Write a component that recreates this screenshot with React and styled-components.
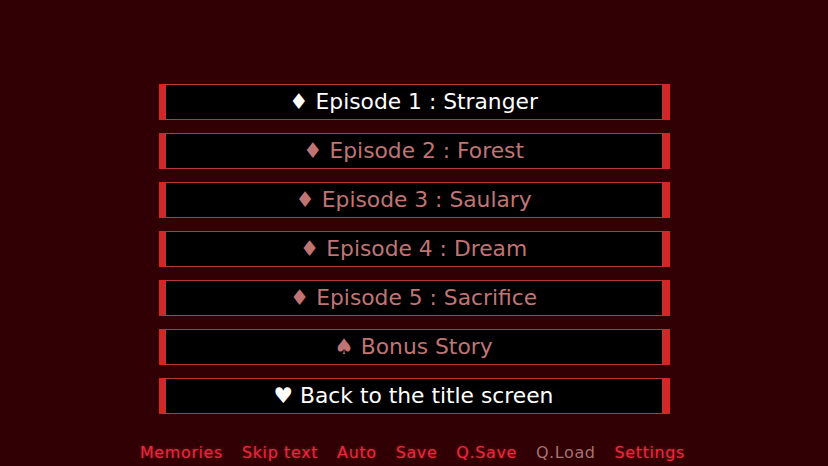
import React from "react";
import styled, { createGlobalStyle } from "styled-components";

const Global = createGlobalStyle`
  html, body { margin: 0; padding: 0; background: #300004; }
  #root { width: 828px; height: 466px; }
`;

const Screen = styled.div`
  width: 828px;
  height: 466px;
  background: #300004;
  display: flex;
  flex-direction: column;
  align-items: center;
  box-sizing: border-box;
  padding-top: 84px;
  font-family: "DejaVu Sans", sans-serif;
`;

const Menu = styled.div`
  display: flex;
  flex-direction: column;
  gap: 13px;
  width: 511px;
`;

const Choice = styled.div`
  display: flex;
  height: 36px;
`;

const Bar = styled.div`
  width: ${(p) => p.$w}px;
  background: #d42626;
`;

const Box = styled.div`
  flex: 1;
  background: #000;
  border: 1px solid #b43a3a;
  display: flex;
  align-items: center;
  justify-content: center;
  font-size: 21.8px;
  line-height: 1;
  padding-bottom: 1px;
  color: ${(p) => (p.$active ? "#ffffff" : "#c07474")};
`;

const Footer = styled.div`
  margin-top: 29px;
  display: flex;
  gap: 19px;
  margin-left: -3px;
`;

const FootItem = styled.span`
  font-family: "DejaVu Sans", sans-serif;
  font-size: 16px;
  letter-spacing: 0.6px;
  color: ${(p) => (p.$dim ? "#a87272" : "#e8283c")};
  text-shadow: ${(p) => (p.$dim ? "none" : "0 0 3px rgba(230,40,60,0.6)")};
`;

const items = [
  { t: "♦ Episode 1 : Stranger", a: true },
  { t: "♦ Episode 2 : Forest" },
  { t: "♦ Episode 3 : Saulary" },
  { t: "♦ Episode 4 : Dream" },
  { t: "♦ Episode 5 : Sacrifice" },
  { t: "♠ Bonus Story" },
  { t: "♥ Back to the title screen", a: true },
];

const foot = ["Memories", "Skip text", "Auto", "Save", "Q.Save", "Q.Load", "Settings"];

export default function App() {
  return (
    <>
      <Global />
      <Screen>
        <Menu>
          {items.map((it) => (
            <Choice key={it.t}>
              <Bar $w={6} />
              <Box $active={it.a}>{it.t}</Box>
              <Bar $w={7} />
            </Choice>
          ))}
        </Menu>
        <Footer>
          {foot.map((f) => (
            <FootItem key={f} $dim={f === "Q.Load"}>{f}</FootItem>
          ))}
        </Footer>
      </Screen>
    </>
  );
}
